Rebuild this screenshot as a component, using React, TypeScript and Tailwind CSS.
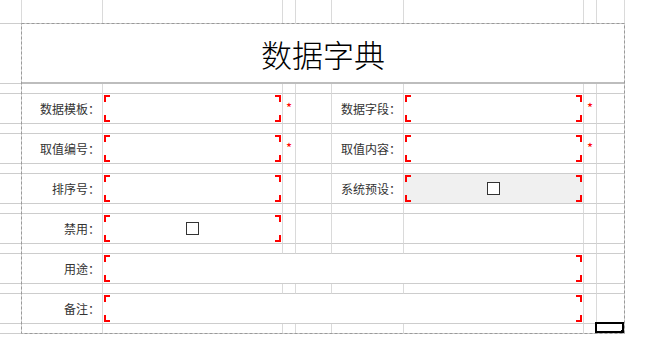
import clsx from "clsx";

type FormRow = {
  label: string;
  required?: boolean;
  checkbox?: boolean;
  rightLabel?: string;
  rightRequired?: boolean;
  rightCheckbox?: boolean;
  rightGray?: boolean;
  wide?: boolean;
};

const rows: FormRow[] = [
  { label: "数据模板：", required: true, rightLabel: "数据字段：", rightRequired: true },
  { label: "取值编号：", required: true, rightLabel: "取值内容：", rightRequired: true },
  { label: "排序号：", rightLabel: "系统预设：", rightCheckbox: true, rightGray: true },
  { label: "禁用：", checkbox: true },
  { label: "用途：", wide: true },
  { label: "备注：", wide: true },
];

const Cell = ({
  className,
  children,
}: {
  className?: string;
  children?: React.ReactNode;
}) => (
  <div className={clsx("border-r border-b border-r-[#dadada] border-b-[#cdcdcd]", className)}>
    {children}
  </div>
);

// red corner marks of an editable cell
const Brackets = () => (
  <>
    <span className="absolute left-[1px] top-[1px] w-[6px] h-[7px] border-l-2 border-t-2 border-[#ff0000]" />
    <span className="absolute right-[1px] top-[1px] w-[6px] h-[7px] border-r-2 border-t-2 border-[#ff0000]" />
    <span className="absolute left-[1px] bottom-[1px] w-[6px] h-[7px] border-l-2 border-b-2 border-[#ff0000]" />
    <span className="absolute right-[1px] bottom-[1px] w-[6px] h-[7px] border-r-2 border-b-2 border-[#ff0000]" />
  </>
);

const Checkbox = () => (
  <span className="block w-[13px] h-[13px] border border-[#333333] bg-white" />
);

const Input = ({
  className,
  checkbox,
}: {
  className?: string;
  checkbox?: boolean;
}) => (
  <Cell className={clsx("relative flex items-center justify-center", className)}>
    <Brackets />
    {checkbox && <Checkbox />}
  </Cell>
);

const Label = ({ text }: { text?: string }) => (
  <Cell className="flex items-center justify-end pr-[2px] text-[12px] text-[#333333]">
    {text}
  </Cell>
);

const Star = ({ show }: { show?: boolean }) => (
  <Cell className="flex items-center justify-center text-[13px] leading-none text-[#ff0000]">
    {show ? <span className="-mt-[2px]">*</span> : null}
  </Cell>
);

const Spacer = () => (
  <>
    {Array.from({ length: 9 }).map((_, i) => (
      <Cell key={i} />
    ))}
  </>
);

export default function App() {
  return (
    <div className="w-[647px] h-[344px] bg-white overflow-hidden font-['Noto_Sans_CJK_SC','Noto_Sans',sans-serif]">
      <div className="relative w-[625px]">
        <div className="grid grid-cols-[22px_81px_180px_13px_36px_72px_180px_13px_28px] grid-rows-[24px_60px_10px_repeat(6,30px_10px)]">
          {/* top header row */}
          <Spacer />

          {/* title */}
          <Cell />
          <div className="col-span-8 border-r border-r-[#dadada] border-b-2 border-b-[#bdbdbd] flex items-center justify-center pt-[2px] text-[31px] font-light text-black">
            数据字典
          </div>

          <Spacer />

          {rows.map((r, i) => (
            <div key={i} className="contents">
              <Cell />
              <Label text={r.label} />
              {r.wide ? (
                <>
                  <Input className="col-span-5" />
                  <Cell />
                  <Cell />
                </>
              ) : (
                <>
                  <Input checkbox={r.checkbox} />
                  <Star show={r.required} />
                  <Cell />
                  <Label text={r.rightLabel} />
                  {r.rightLabel ? (
                    <Input
                      checkbox={r.rightCheckbox}
                      className={r.rightGray ? "bg-[#f0f0f0]" : undefined}
                    />
                  ) : (
                    <Cell />
                  )}
                  <Star show={r.rightRequired} />
                  <Cell />
                </>
              )}
              {/* spacer row below */}
              {i === rows.length - 1 ? (
                <>
                  {Array.from({ length: 8 }).map((_, k) => (
                    <Cell key={k} />
                  ))}
                  <Cell className="relative">
                    <span className="absolute left-[-2px] top-[-2px] right-0 bottom-0 border-2 border-black" />
                    <span className="absolute right-[1px] bottom-[1px] w-[2px] h-[2px] bg-black" />
                  </Cell>
                </>
              ) : (
                <Spacer />
              )}
            </div>
          ))}
        </div>

        {/* print area marquee */}
        <svg
          className="absolute left-[21px] top-[23px] pointer-events-none"
          width="604"
          height="311"
        >
          <rect
            x="0.5"
            y="0.5"
            width="603"
            height="310"
            fill="none"
            stroke="#9a9a9a"
            strokeDasharray="3 2"
          />
        </svg>
      </div>
    </div>
  );
}
